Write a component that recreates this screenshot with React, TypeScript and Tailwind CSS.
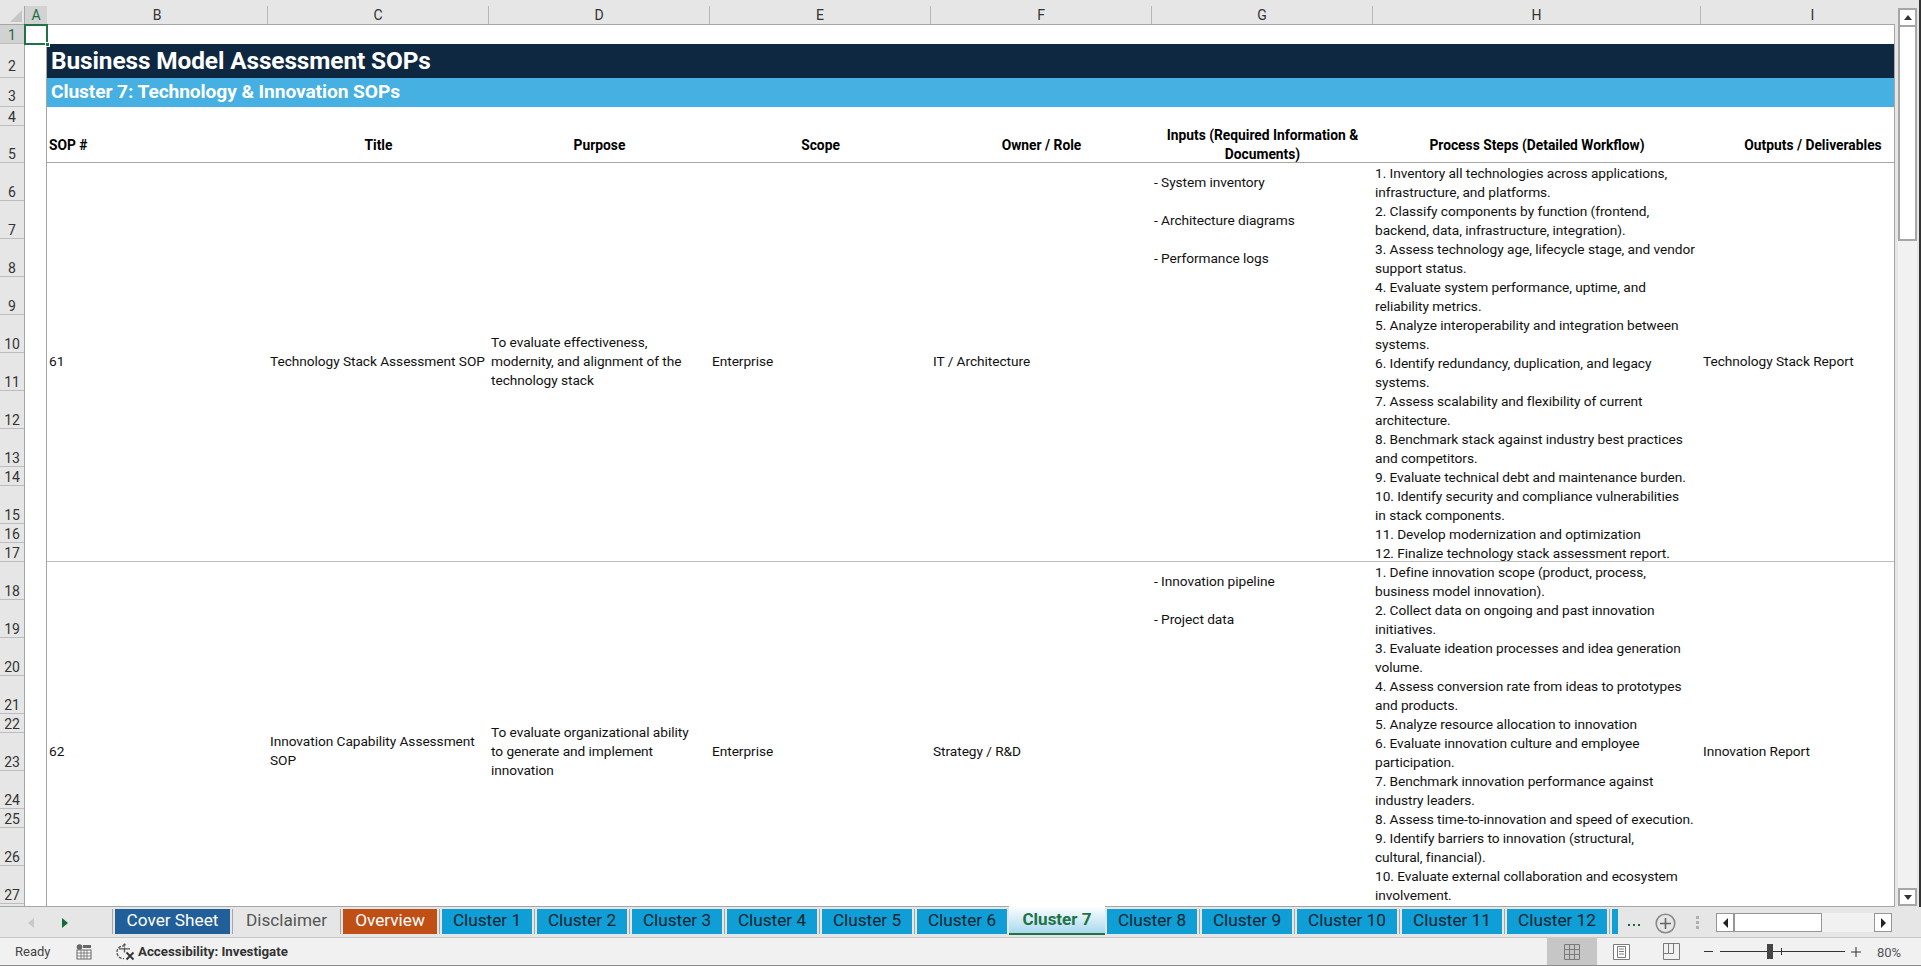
import React from "react";

const colNames: [string, number, boolean?][] = [
  ["A", 22, true],
  ["B", 221],
  ["C", 221],
  ["D", 221],
  ["E", 221],
  ["F", 221],
  ["G", 221],
  ["H", 328],
  ["I", 224],
];

const rowHeights = [19, 34, 29, 19, 37, 38, 38, 38, 38, 38, 38, 38, 38, 19, 38, 19, 19, 38, 38, 38, 38, 19, 38, 38, 19, 38, 38, 38];

type Sop = {
  no: string;
  title: string[];
  purpose: string[];
  scope: string;
  owner: string;
  inputs: string[];
  steps: string[];
  output: string;
  rowStart: number;
  rowEnd: number;
};

const sops: Sop[] = [
  {
    no: "61",
    title: ["Technology Stack Assessment SOP"],
    purpose: ["To evaluate effectiveness,", "modernity, and alignment of the", "technology stack"],
    scope: "Enterprise",
    owner: "IT / Architecture",
    inputs: ["- System inventory", "- Architecture diagrams", "- Performance logs"],
    steps: [
      "1. Inventory all technologies across applications,",
      "infrastructure, and platforms.",
      "2. Classify components by function (frontend,",
      "backend, data, infrastructure, integration).",
      "3. Assess technology age, lifecycle stage, and vendor",
      "support status.",
      "4. Evaluate system performance, uptime, and",
      "reliability metrics.",
      "5. Analyze interoperability and integration between",
      "systems.",
      "6. Identify redundancy, duplication, and legacy",
      "systems.",
      "7. Assess scalability and flexibility of current",
      "architecture.",
      "8. Benchmark stack against industry best practices",
      "and competitors.",
      "9. Evaluate technical debt and maintenance burden.",
      "10. Identify security and compliance vulnerabilities",
      "in stack components.",
      "11. Develop modernization and optimization",
      "12. Finalize technology stack assessment report.",
    ],
    output: "Technology Stack Report",
    rowStart: 6,
    rowEnd: 18,
  },
  {
    no: "62",
    title: ["Innovation Capability Assessment", "SOP"],
    purpose: ["To evaluate organizational ability", "to generate and implement", "innovation"],
    scope: "Enterprise",
    owner: "Strategy / R&D",
    inputs: ["- Innovation pipeline", "- Project data"],
    steps: [
      "1. Define innovation scope (product, process,",
      "business model innovation).",
      "2. Collect data on ongoing and past innovation",
      "initiatives.",
      "3. Evaluate ideation processes and idea generation",
      "volume.",
      "4. Assess conversion rate from ideas to prototypes",
      "and products.",
      "5. Analyze resource allocation to innovation",
      "6. Evaluate innovation culture and employee",
      "participation.",
      "7. Benchmark innovation performance against",
      "industry leaders.",
      "8. Assess time-to-innovation and speed of execution.",
      "9. Identify barriers to innovation (structural,",
      "cultural, financial).",
      "10. Evaluate external collaboration and ecosystem",
      "involvement.",
    ],
    output: "Innovation Report",
    rowStart: 18,
    rowEnd: 29,
  },
];

const tabs: { name: string; cls: string; w: string }[] = [
  { name: "Cover Sheet", cls: "bg-[#215f9a] text-white", w: "w-[115px]" },
  { name: "Disclaimer", cls: "text-[#555555]", w: "w-[103px]" },
  { name: "Overview", cls: "bg-[#c04f15] text-white", w: "w-[94px]" },
  { name: "Cluster 1", cls: "bg-[#0f9ed5] text-[#0b2530]", w: "w-[90px]" },
  { name: "Cluster 2", cls: "bg-[#0f9ed5] text-[#0b2530]", w: "w-[90px]" },
  { name: "Cluster 3", cls: "bg-[#0f9ed5] text-[#0b2530]", w: "w-[90px]" },
  { name: "Cluster 4", cls: "bg-[#0f9ed5] text-[#0b2530]", w: "w-[90px]" },
  { name: "Cluster 5", cls: "bg-[#0f9ed5] text-[#0b2530]", w: "w-[90px]" },
  { name: "Cluster 6", cls: "bg-[#0f9ed5] text-[#0b2530]", w: "w-[90px]" },
];
const tabs2 = [
  { name: "Cluster 8", w: "w-[90px]" },
  { name: "Cluster 9", w: "w-[90px]" },
  { name: "Cluster 10", w: "w-[100px]" },
  { name: "Cluster 11", w: "w-[100px]" },
  { name: "Cluster 12", w: "w-[100px]" },
];

const Sep = () => <div className="w-[1px] h-[25px] mx-[2px] bg-[#a6a6a6] shrink-0" />;

function Lines({ lines }: { lines: string[] }) {
  return (
    <>
      {lines.map((l, i) => (
        <div key={i} className="h-[19px] leading-[19px] whitespace-nowrap">
          {l}
        </div>
      ))}
    </>
  );
}

export default function App() {
  const gridCols = colNames.map((c) => c[1] + "px").join(" ");
  const gridRows = rowHeights.map((h) => h + "px").join(" ");
  const cellText = "font-['Roboto',sans-serif] text-[13.7px] tracking-[-0.05px] text-[#111111]";
  const head = "font-['Roboto',sans-serif] font-bold text-[13.8px] text-black";
  const innerCols = colNames.slice(1).map((c) => c[1] + "px").join(" ");
  return (
    <div className="relative w-[1921px] h-[966px] overflow-hidden bg-[#e6e6e6] font-['Roboto',sans-serif] flex flex-col">
      {/* upper area */}
      <div className="flex h-[907px] shrink-0">
        <div className="w-[1895px] flex flex-col">
          <div className="h-[6px] shrink-0" />
          {/* column headers */}
          <div className="flex h-[19px] shrink-0 border-b border-[#a6a6a6] overflow-hidden">
            <div className="w-[25px] relative shrink-0 border-r border-[#a6a6a6]">
              <div className="absolute right-[2px] bottom-[2px] w-0 h-0 border-l-[12px] border-l-transparent border-b-[12px] border-b-[#c6c6c6]" />
            </div>
            {colNames.map(([n, w, sel]) => (
              <div
                key={n}
                style={{ width: w }}
                className={
                  "shrink-0 flex items-center justify-center text-[14px] " +
                  (sel
                    ? "bg-[#d2d2d2] text-[#1f6b42]"
                    : "text-[#333333] border-r border-[#b8b8b8]")
                }
              >
                {n}
              </div>
            ))}
          </div>
          <div className="flex flex-1 min-h-0 overflow-hidden border-b border-[#a6a6a6]">
            {/* row headers */}
            <div className="w-[25px] shrink-0 flex flex-col border-r border-[#a6a6a6]">
              {rowHeights.slice(0, 27).map((h, i) => (
                <div
                  key={i}
                  style={{ height: h }}
                  className={
                    "shrink-0 flex items-end justify-center border-b border-[#bdbdbd] text-[14px] leading-[15px] " +
                    (i === 0 ? "bg-[#d2d2d2] text-[#1f6b42]" : "text-[#333333]") +
                    (i === 1 ? " pb-[3px]" : i === 2 ? " pb-[2px]" : "")
                  }
                >
                  {i + 1}
                </div>
              ))}
            </div>
            {/* sheet */}
            <div
              className="flex-1 grid bg-white border-r border-[#a6a6a6] overflow-hidden"
              style={{ gridTemplateColumns: gridCols, gridTemplateRows: gridRows }}
            >
              <div className="row-start-1 row-end-30 col-start-1 col-end-2 border-r border-[#a6a6a6]" />
              <div className="row-start-2 row-end-3 col-start-2 col-end-10 bg-[#0e2841] text-white font-bold text-[24.4px] tracking-[-0.1px] flex items-center pl-[4px] pt-[1px] whitespace-nowrap">
                Business Model Assessment SOPs
              </div>
              <div className="row-start-3 row-end-4 col-start-2 col-end-10 bg-[#45b0e1] text-white font-bold text-[19.2px] tracking-[-0.1px] flex items-center pl-[4px] whitespace-nowrap">
                Cluster 7: Technology &amp; Innovation SOPs
              </div>
              {/* header row */}
              <div className="row-start-5 row-end-6 col-start-2 col-end-10 grid border-b border-[#a6a6a6]" style={{ gridTemplateColumns: innerCols }}>
                <div className={head + " flex items-center pl-[2px]"}>SOP #</div>
                <div className={head + " flex items-center justify-center"}>Title</div>
                <div className={head + " flex items-center justify-center"}>Purpose</div>
                <div className={head + " flex items-center justify-center"}>Scope</div>
                <div className={head + " flex items-center justify-center"}>Owner / Role</div>
                <div className={head + " flex flex-col justify-center items-center"}>
                  <div className="h-[19px] leading-[19px] whitespace-nowrap">Inputs (Required Information &amp;</div>
                  <div className="h-[19px] leading-[19px] whitespace-nowrap">Documents)</div>
                </div>
                <div className={head + " flex items-center justify-center"}>Process Steps (Detailed Workflow)</div>
                <div className={head + " flex items-center justify-center"}>Outputs / Deliverables</div>
              </div>
              {sops.map((s) => {
                const nudge = s.no === "61" ? " pb-[3px]" : " pb-[2px]";
                return (
                  <div
                    key={s.no}
                    className={"col-start-2 col-end-10 grid overflow-hidden " + (s.no === "61" ? "border-b border-[#bdbdbd]" : "")}
                    style={{
                      gridRowStart: s.rowStart,
                      gridRowEnd: s.rowEnd,
                      gridTemplateColumns: innerCols,
                    }}
                  >
                    <div className={cellText + " flex items-center pl-[2px]" + nudge}>{s.no}</div>
                    <div className={cellText + " flex flex-col justify-center pl-[2px]" + nudge}>
                      <Lines lines={s.title} />
                    </div>
                    <div className={cellText + " flex flex-col justify-center pl-[2px]" + nudge}>
                      <Lines lines={s.purpose} />
                    </div>
                    <div className={cellText + " flex items-center pl-[2px]" + nudge}>{s.scope}</div>
                    <div className={cellText + " flex items-center pl-[2px]" + nudge}>{s.owner}</div>
                    <div className={cellText + " flex flex-col pl-[2px] pt-[10px] gap-[19px]"}>
                      <Lines lines={s.inputs} />
                    </div>
                    <div className={cellText + " flex flex-col pl-[2px] pt-[1px]"}>
                      <Lines lines={s.steps} />
                    </div>
                    <div className={cellText + " flex items-center pl-[2px]" + nudge}>{s.output}</div>
                  </div>
                );
              })}
            </div>
          </div>
        </div>
        {/* vertical scrollbar */}
        <div className="flex-1 flex">
          <div className="w-[3px]" />
          <div className="w-[19px] mt-[8px] h-[898px] flex flex-col bg-[#f1f1f1]">
            <div className="h-[19px] bg-white border-2 border-[#a6a6a6] flex items-center justify-center shrink-0">
              <div className="w-0 h-0 border-l-[4px] border-r-[4px] border-b-[5px] border-l-transparent border-r-transparent border-b-[#333333]" />
            </div>
            <div className="h-[214px] bg-white border-2 border-[#a6a6a6] border-t-0 shrink-0" />
            <div className="flex-1" />
            <div className="h-[18px] bg-white border-2 border-[#a6a6a6] flex items-center justify-center shrink-0">
              <div className="w-0 h-0 border-l-[4px] border-r-[4px] border-t-[5px] border-l-transparent border-r-transparent border-t-[#333333]" />
            </div>
          </div>
          <div className="flex-1" />
          <div className="w-[2px] bg-[#333333]" />
        </div>
      </div>

      {/* tab strip */}
      <div className="h-[31px] shrink-0 flex border-b border-[#c8c8c8] relative">
        <div className="w-[110px] shrink-0 relative">
          <div className="absolute left-[28px] top-[11px] w-0 h-0 border-t-[5px] border-b-[5px] border-r-[6px] border-t-transparent border-b-transparent border-r-[#c8c8c8]" />
          <div className="absolute left-[62px] top-[11px] w-0 h-0 border-t-[5px] border-b-[5px] border-l-[6px] border-t-transparent border-b-transparent border-l-[#0f6b3a]" />
        </div>
        <div className="flex items-start pt-[2px] text-[17.2px]">
          {tabs.map((t) => (
            <React.Fragment key={t.name}>
              <Sep />
              <div className={t.w + " h-[25px] pb-[2px] shrink-0 flex items-center justify-center whitespace-nowrap " + t.cls}>{t.name}</div>
            </React.Fragment>
          ))}
          <div className="relative w-[96px] h-[29px] -mt-[3px] ml-[2px] mr-[2px] shrink-0 bg-gradient-to-b from-white to-[#a8d8ee] border-b-[2px] border-[#217346] flex items-center justify-center font-bold text-[#217346] text-[17px]">
            Cluster 7
          </div>
          {tabs2.map((t) => (
            <React.Fragment key={t.name}>
              <div className={t.w + " h-[25px] pb-[2px] shrink-0 flex items-center justify-center bg-[#0f9ed5] text-[#0b2530] whitespace-nowrap"}>{t.name}</div>
              <Sep />
            </React.Fragment>
          ))}
          <div className="w-[6px] h-[25px] bg-[#0f9ed5] shrink-0" />
        </div>
        <div className="absolute left-[1628px] top-[17px] flex gap-[3px]">
          <span className="w-[2px] h-[2px] bg-[#0f6b3a]" />
          <span className="w-[2px] h-[2px] bg-[#0f6b3a]" />
          <span className="w-[2px] h-[2px] bg-[#0f6b3a]" />
        </div>
        <svg className="absolute left-[1655px] top-[6px]" width="21" height="21" viewBox="0 0 21 21">
          <circle cx="10.5" cy="10.5" r="9.3" fill="none" stroke="#8a8a8a" strokeWidth="1.6" />
          <path d="M10.5 5v11M5 10.5h11" stroke="#666666" strokeWidth="1.6" />
        </svg>
        <div className="absolute left-[1696px] top-[9px] flex flex-col gap-[2px]">
          <div className="w-[3px] h-[3px] bg-[#b0b0b0]" />
          <div className="w-[3px] h-[3px] bg-[#b0b0b0]" />
          <div className="w-[3px] h-[3px] bg-[#b0b0b0]" />
        </div>
        <div className="absolute left-[1716px] top-[6px] w-[176px] h-[19px] flex bg-[#f1f1f1]">
          <div className="w-[19px] h-[19px] bg-white border border-[#969696] border-r-2 flex items-center justify-center">
            <div className="w-0 h-0 border-t-[5px] border-b-[5px] border-r-[5px] border-t-transparent border-b-transparent border-r-[#222222]" />
          </div>
          <div className="w-[87px] h-[19px] bg-white border border-l-0 border-[#969696]" />
          <div className="flex-1" />
          <div className="w-[18px] h-[19px] bg-white border border-[#969696] flex items-center justify-center">
            <div className="w-0 h-0 border-t-[5px] border-b-[5px] border-l-[5px] border-t-transparent border-b-transparent border-l-[#222222]" />
          </div>
        </div>
      </div>

      {/* status bar */}
      <div className="flex-1 bg-[#f1f1f1] border-b border-[#8a8a8a] flex items-center relative text-[13px] text-[#444444]">
        <div className="ml-[15px] w-[60px]">Ready</div>
        <svg className="ml-[1px]" width="16" height="16" viewBox="0 0 16 16">
          <circle cx="3.5" cy="3" r="2.8" fill="#666666" />
          <rect x="7" y="1" width="8" height="3" fill="#666666" />
          <rect x="1" y="6" width="14" height="9" fill="#ffffff" stroke="#666666" />
          <path d="M1 9h14M1 12h14M5 6v9M8 6v9M11 6v9" stroke="#666666" strokeWidth="0.8" />
        </svg>
        <svg className="ml-[24px]" width="20" height="18" viewBox="0 0 20 18">
          <path d="M9 3.2A6.3 6.3 0 1 0 8 15.5" fill="none" stroke="#555555" strokeWidth="1.3" strokeDasharray="3 1.2" />
          <circle cx="8.5" cy="1.6" r="1.2" fill="#555555" />
          <path d="M3 5.8h11M8.5 4.5v5" stroke="#555555" strokeWidth="1.3" />
          <path d="M10.5 9.5l7 7M17.5 9.5l-7 7" stroke="#333333" strokeWidth="1.8" />
        </svg>
        <div className="ml-[2px] font-bold text-[13.3px] text-[#333333] whitespace-nowrap">Accessibility: Investigate</div>
        <div className="absolute left-[1547px] top-0 bottom-0 w-[50px] bg-[#c6c6c6] flex items-center justify-center">
          <svg width="16" height="16" viewBox="0 0 16 16">
            <path d="M.5.5h15v15H.5zM.5 5.5h15M.5 10.5h15M5.5.5v15M10.5.5v15" fill="none" stroke="#7a7a7a" />
          </svg>
        </div>
        <svg className="absolute left-[1613px] top-[6px]" width="17" height="16" viewBox="0 0 17 16">
          <path d="M.5.5h16v15H.5z" fill="#fff" stroke="#7a7a7a" />
          <path d="M4.5 2.5h8v11h-8zM6 5h5M6 7.5h5M6 10h5" fill="none" stroke="#7a7a7a" />
        </svg>
        <svg className="absolute left-[1663px] top-[5px]" width="17" height="17" viewBox="0 0 17 17">
          <path d="M.5.5h16v16H.5zM.5 10.5h10V.5M5.5.5v10" fill="none" stroke="#7a7a7a" />
        </svg>
        <div className="absolute left-[1704px] top-[13px] w-[9px] h-[1px] bg-[#333333]" />
        <div className="absolute left-[1720px] top-[13px] w-[125px] h-[1px] bg-[#333333]" />
        <div className="absolute left-[1767px] top-[6px] w-[6px] h-[15px] bg-[#444444]" />
        <div className="absolute left-[1781px] top-[10px] w-[1px] h-[7px] bg-[#333333]" />
        <svg className="absolute left-[1851px] top-[9px]" width="10" height="10" viewBox="0 0 10 10">
          <path d="M0 5h10M5 0v10" stroke="#333333" />
        </svg>
        <div className="absolute left-[1877px] top-[5px] text-[13px] text-[#555555]">80%</div>
      </div>

      {/* active cell */}
      <div className="absolute left-[24px] top-[24px] w-[24px] h-[21px] border-2 border-[#217346]" />
      <div className="absolute left-[45px] top-[42px] w-[5px] h-[5px] bg-[#217346] border border-white" />
    </div>
  );
}
